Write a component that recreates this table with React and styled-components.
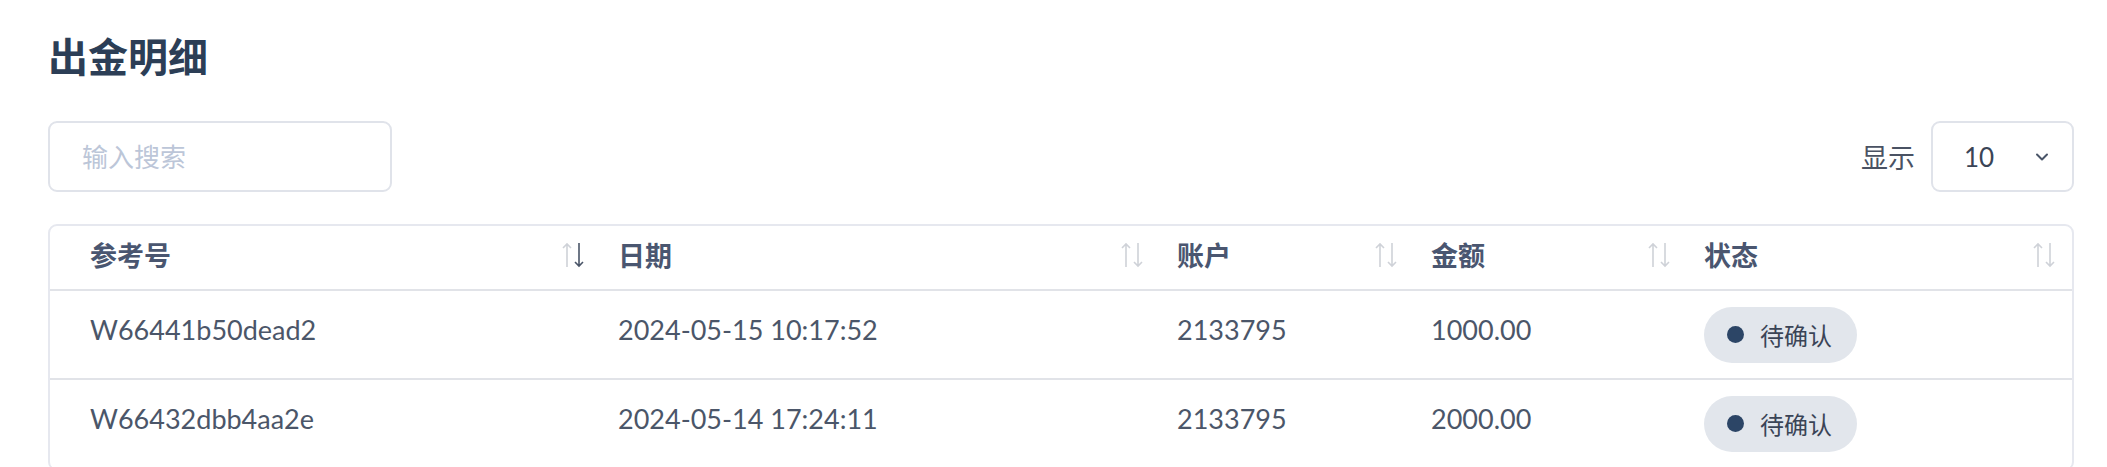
import styled, { createGlobalStyle } from "styled-components";

const GlobalStyle = createGlobalStyle`
  body {
    margin: 0;
    background: #ffffff;
    font-family: "Lato", "Noto Sans CJK SC", sans-serif;
  }
`;

const StyledPage = styled.div`
  padding: 33px 33px 0 48px;
  box-sizing: border-box;
  width: 2107px;
`;

const Title = styled.h1`
  margin: 0;
  height: 48px;
  font-size: 40px;
  line-height: 48px;
  font-weight: 700;
  color: #2c3e56;
`;

const Toolbar = styled.div`
  display: flex;
  align-items: center;
  justify-content: space-between;
  margin-top: 40px;
`;

const SearchInput = styled.input`
  width: 344px;
  height: 71px;
  box-sizing: border-box;
  padding: 0 32px;
  border: 2px solid #e0e3ea;
  border-radius: 9px;
  outline: none;
  font-family: inherit;
  font-size: 26px;
  color: #3a4456;

  &::placeholder {
    color: #bcc6d8;
  }
`;

const PageSize = styled.label`
  display: flex;
  align-items: center;
  gap: 16px;
  font-size: 27px;
  color: #4a5263;
`;

const SelectBox = styled.div`
  width: 143px;
  height: 71px;
  box-sizing: border-box;
  display: flex;
  align-items: center;
  justify-content: space-between;
  padding: 0 22px 0 31px;
  border: 2px solid #e0e3ea;
  border-radius: 9px;
  font-size: 26px;
  color: #3a4456;
`;

const TableWrap = styled.div`
  margin-top: 32px;
  border: 2px solid #e6e8ef;
  border-radius: 9px;
  overflow: hidden;
`;

const Table = styled.table`
  width: 100%;
  border-collapse: collapse;
  table-layout: fixed;
`;

const HeadCell = styled.th`
  height: 64px;
  padding: 0 16px 6px ${({ $first }) => ($first ? "40px" : "17px")};
  box-sizing: border-box;
  text-align: left;
  font-size: 27px;
  font-weight: 700;
  color: #4a5670;
  border-bottom: 2px solid #e1e3e8;

  .cell {
    display: flex;
    align-items: center;
    justify-content: space-between;
  }
`;

const Cell = styled.td`
  height: 89px;
  box-sizing: border-box;
  padding: ${({ $badge }) => ($badge ? "0 16px 0 17px" : "0 16px 10px 17px")};
  vertical-align: middle;
  font-size: 27px;
  color: #4b5669;
  border-bottom: 2px solid #e1e3e8;
  white-space: nowrap;

  &:first-child {
    padding-left: 40px;
  }
`;

const Badge = styled.span`
  display: inline-flex;
  vertical-align: middle;
  align-items: center;
  gap: 16px;
  height: 56px;
  padding: 0 25px 0 23px;
  box-sizing: border-box;
  border-radius: 28px;
  background: #e2e6ec;
  font-size: 24px;
  color: #3a4456;

  &::before {
    content: "";
    width: 17px;
    height: 17px;
    border-radius: 50%;
    background: #2c4566;
  }
`;

const SortIcon = ({ active }) => (
  <svg width="24" height="26" viewBox="0 0 24 26" fill="none" strokeWidth="1.6">
    <g stroke="#cfd2d8">
      <path d="M6 25V2M2 6l4-4 4 4" />
    </g>
    <g stroke={active ? "#4a5568" : "#cfd2d8"}>
      <path d="M18 1v23M14 20l4 4 4-4" />
    </g>
  </svg>
);

const ChevronDown = () => (
  <svg width="16" height="10" viewBox="0 0 16 10" fill="none">
    <path d="M3 2.5l5 5 5-5" stroke="#4a5568" strokeWidth="2" strokeLinecap="round" strokeLinejoin="round" />
  </svg>
);

const columns = [
  { key: "ref", label: "参考号", width: 551, active: true },
  { key: "date", label: "日期", width: 559 },
  { key: "account", label: "账户", width: 254 },
  { key: "amount", label: "金额", width: 273 },
  { key: "status", label: "状态" }
];

const rows = [
  { ref: "W66441b50dead2", date: "2024-05-15 10:17:52", account: "2133795", amount: "1000.00", status: "待确认" },
  { ref: "W66432dbb4aa2e", date: "2024-05-14 17:24:11", account: "2133795", amount: "2000.00", status: "待确认" }
];

const App = () => (
  <>
    <GlobalStyle />
    <StyledPage>
      <Title>出金明细</Title>
      <Toolbar>
        <SearchInput placeholder="输入搜索" />
        <PageSize>
          显示
          <SelectBox>
            <span>10</span>
            <ChevronDown />
          </SelectBox>
        </PageSize>
      </Toolbar>
      <TableWrap>
        <Table>
          <colgroup>
            {columns.map((c) => (
              <col key={c.key} style={c.width ? { width: c.width } : undefined} />
            ))}
          </colgroup>
          <thead>
            <tr>
              {columns.map((c, i) => (
                <HeadCell key={c.key} $first={i === 0}>
                  <div className="cell">
                    <span>{c.label}</span>
                    <SortIcon active={c.active} />
                  </div>
                </HeadCell>
              ))}
            </tr>
          </thead>
          <tbody>
            {rows.map((r) => (
              <tr key={r.ref}>
                <Cell>{r.ref}</Cell>
                <Cell>{r.date}</Cell>
                <Cell>{r.account}</Cell>
                <Cell>{r.amount}</Cell>
                <Cell $badge>
                  <Badge>{r.status}</Badge>
                </Cell>
              </tr>
            ))}
          </tbody>
        </Table>
      </TableWrap>
    </StyledPage>
  </>
);

export default App;
